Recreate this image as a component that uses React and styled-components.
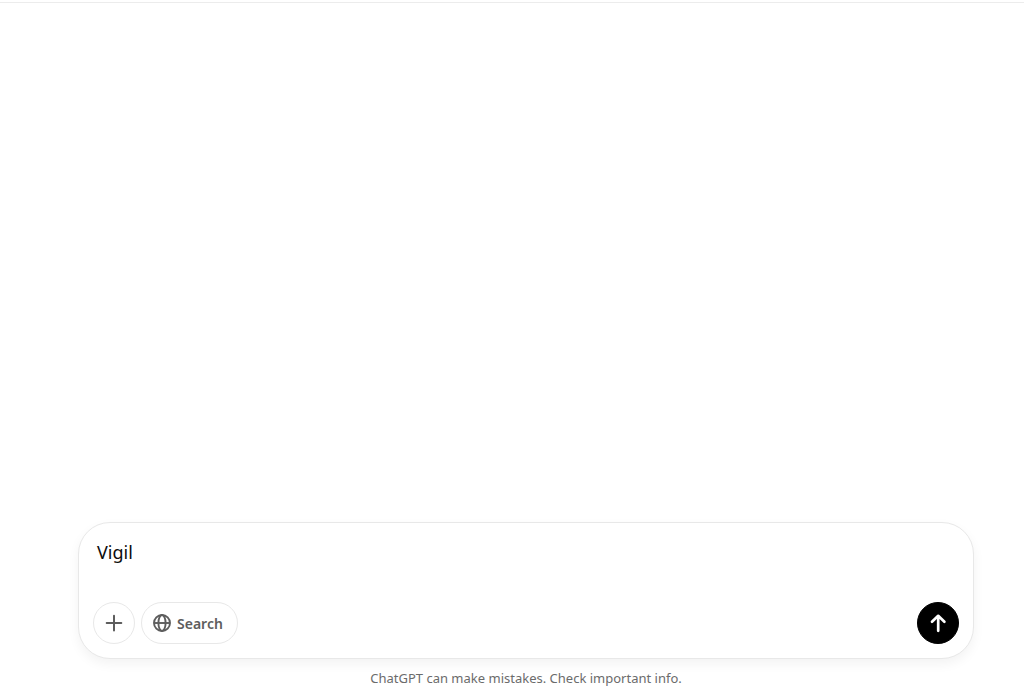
import React, { useState } from "react";
import styled, { createGlobalStyle } from "styled-components";

const GlobalStyle = createGlobalStyle`
  * {
    box-sizing: border-box;
  }
  body {
    margin: 0;
    background: #fff;
    color: #0d0d0d;
    font-family: "Noto Sans", "Open Sans", sans-serif;
  }
  button,
  textarea {
    font-family: inherit;
  }
`;

const PlusIcon = () => (
  <svg width="24" height="24" viewBox="0 0 24 24" fill="none" aria-hidden="true">
    <path
      d="M12 4.8v14.6M4.7 12.1h14.6"
      stroke="currentColor"
      strokeWidth="2"
      strokeLinecap="round"
    />
  </svg>
);

const GlobeIcon = () => (
  <svg
    width="20"
    height="20"
    viewBox="0 0 20 20"
    fill="none"
    stroke="currentColor"
    strokeWidth="1.9"
    aria-hidden="true"
  >
    <circle cx="10" cy="10" r="8" />
    <ellipse cx="10" cy="10" rx="3.6" ry="8" />
    <path d="M2 10h16" />
  </svg>
);

const ArrowIcon = () => (
  <svg width="24" height="24" viewBox="0 0 24 24" fill="none" aria-hidden="true">
    <path
      d="M12.2 19.8V4.8M6 10.8l6.2-6 6.2 6"
      stroke="currentColor"
      strokeWidth="2.7"
      strokeLinecap="round"
      strokeLinejoin="round"
    />
  </svg>
);

const App = () => {
  const [message, setMessage] = useState("Vigil");

  return (
    <Page>
      <GlobalStyle />
      <Header />
      <Thread />
      <Bottom>
        <Composer onSubmit={(e) => e.preventDefault()}>
          <Prompt
            rows={1}
            aria-label="Message"
            value={message}
            onChange={(e) => setMessage(e.target.value)}
          />
          <Toolbar>
            <Tools>
              <RoundButton type="button" aria-label="Add files">
                <PlusIcon />
              </RoundButton>
              <SearchButton type="button">
                <GlobeIcon />
                Search
              </SearchButton>
            </Tools>
            <SendButton type="submit" aria-label="Send message">
              <ArrowIcon />
            </SendButton>
          </Toolbar>
        </Composer>
        <Note>ChatGPT can make mistakes. Check important info.</Note>
      </Bottom>
    </Page>
  );
};

const Page = styled.div`
  display: flex;
  flex-direction: column;
  min-height: 100vh;
`;

const Header = styled.header`
  height: 3px;
  border-bottom: 1px solid #ececec;
`;

const Thread = styled.main`
  flex: 1;
`;

const Bottom = styled.div`
  padding: 0 50px 0 78px;
`;

const Composer = styled.form`
  display: flex;
  flex-direction: column;
  gap: 35px;
  padding: 14px;
  border: 1px solid #e8e8e8;
  border-radius: 32px;
  background: #fff;
  box-shadow: 0 5px 12px rgba(0, 0, 0, 0.05);
`;

const Prompt = styled.textarea`
  display: block;
  width: 100%;
  height: 30px;
  padding: 0 4px;
  border: 0;
  outline: 0;
  resize: none;
  overflow: hidden;
  background: transparent;
  color: #0d0d0d;
  font-size: 18px;
  line-height: 30px;
`;

const Toolbar = styled.div`
  display: flex;
  align-items: center;
  justify-content: space-between;
`;

const Tools = styled.div`
  display: flex;
  gap: 6px;
`;

const RoundButton = styled.button`
  display: flex;
  align-items: center;
  justify-content: center;
  width: 42px;
  height: 42px;
  padding: 0;
  border: 1px solid #e8e8e8;
  border-radius: 21px;
  background: transparent;
  color: #5d5d5d;
  cursor: pointer;
`;

const SearchButton = styled(RoundButton)`
  gap: 5px;
  width: auto;
  padding: 0 14px 0 10px;
  font-size: 14px;
  font-weight: 600;
`;

const SendButton = styled(RoundButton)`
  border-color: #000;
  background: #000;
  color: #fff;
`;

const Note = styled.p`
  margin: 0;
  padding: 10px 0 0;
  color: #6b6b6b;
  font-size: 13px;
  line-height: 18px;
  text-align: center;
`;

export default App;
